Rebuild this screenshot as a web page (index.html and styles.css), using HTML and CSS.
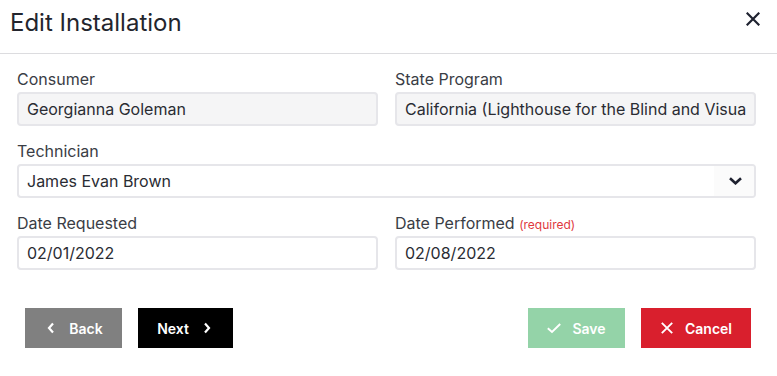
FILE: index.html
```html
<!DOCTYPE html>
<html lang="en">
<head>
<meta charset="utf-8">
<title>Edit Installation</title>
<link rel="stylesheet" href="styles.css">
</head>
<body>
<div class="modal">
  <header class="modal-header">
    <h1 class="modal-title">Edit Installation</h1>
    <button class="close" aria-label="Close">
      <svg width="14" height="14" viewBox="0 0 14 14"><path d="M1.5 1.5 L12.5 12.5 M12.5 1.5 L1.5 12.5" stroke="#1f2230" stroke-width="2.2" stroke-linecap="square" fill="none"/></svg>
    </button>
  </header>
  <form class="modal-body">
    <div class="row two">
      <div class="field">
        <label class="label">Consumer</label>
        <input class="control disabled" type="text" value="Georgianna Goleman" readonly>
      </div>
      <div class="field">
        <label class="label">State Program</label>
        <input class="control disabled" type="text" value="California (Lighthouse for the Blind and Visually Impaired)" readonly>
      </div>
    </div>
    <div class="row">
      <div class="field">
        <label class="label">Technician</label>
        <div class="control select">
          <span>James Evan Brown</span>
          <span class="caret">
            <svg width="13" height="8" viewBox="0 0 13 8"><path d="M1 1.3 L6.5 6.3 L12 1.3" stroke="#1f2230" stroke-width="2.6" fill="none"/></svg>
          </span>
        </div>
      </div>
    </div>
    <div class="row two">
      <div class="field">
        <label class="label">Date Requested</label>
        <input class="control" type="text" value="02/01/2022" readonly>
      </div>
      <div class="field">
        <label class="label">Date Performed <span class="req">(required)</span></label>
        <input class="control" type="text" value="02/08/2022" readonly>
      </div>
    </div>
  </form>
  <footer class="modal-footer">
    <div class="group">
      <button class="btn btn-back">
        <svg class="ico" width="14" height="14" viewBox="0 0 14 14"><path d="M9 2.5 L5 7 L9 11.5" stroke="#fff" stroke-width="2.2" fill="none"/></svg>
        <span>Back</span>
      </button>
      <button class="btn btn-next">
        <span>Next</span>
        <svg class="ico" width="14" height="14" viewBox="0 0 14 14"><path d="M5 2.5 L9 7 L5 11.5" stroke="#fff" stroke-width="2.2" fill="none"/></svg>
      </button>
    </div>
    <div class="group">
      <button class="btn btn-save">
        <svg class="ico" width="14" height="14" viewBox="0 0 14 14"><path d="M0.8 7.2 L5 11 L13.2 3" stroke="#fff" stroke-width="1.9" fill="none"/></svg>
        <span>Save</span>
      </button>
      <button class="btn btn-cancel">
        <svg class="ico" width="14" height="14" viewBox="0 0 14 14"><path d="M1.8 1.8 L12.2 12.2 M12.2 1.8 L1.8 12.2" stroke="#fff" stroke-width="1.9" fill="none"/></svg>
        <span>Cancel</span>
      </button>
    </div>
  </footer>
</div>
</body>
</html>
```
FILE: styles.css
```css
* { box-sizing: border-box; }
html, body {
  margin: 0;
  padding: 0;
  background: #ffffff;
}
body {
  font-family: Inter, "Noto Sans", "Liberation Sans", sans-serif;
  color: #212529;
  width: 777px;
  height: 376px;
  overflow: hidden;
}
.modal-header {
  height: 54px;
  border-bottom: 1px solid #dcdcdf;
  display: flex;
  justify-content: space-between;
  align-items: flex-start;
  padding: 8px 17px 0 10px;
}
.modal-title {
  margin: 0;
  font-size: 24px;
  font-weight: 400;
  line-height: 29px;
  color: #23252d;
  letter-spacing: 0;
}
.close {
  border: 0;
  background: none;
  padding: 0;
  margin-top: 4px;
  width: 14px;
  height: 14px;
  display: block;
}
.close svg { display: block; }
.modal-body {
  padding: 13px 21px 0 17px;
  margin: 0;
  display: flex;
  flex-direction: column;
  gap: 13px;
}
.row { display: grid; grid-template-columns: 1fr; }
.row.two { grid-template-columns: 1fr 1fr; column-gap: 17px; }
.field { display: flex; flex-direction: column; min-width: 0; }
.label {
  font-size: 16px;
  line-height: 24px;
  height: 24px;
  color: #3a3d45;
  margin-bottom: 1px;
}
.req {
  font-size: 12px;
  line-height: 1;
  color: #e0383e;
}
.control {
  height: 34px;
  width: 100%;
  border: 2px solid #e6e6ea;
  border-radius: 4px;
  background: #fff;
  font-family: Inter, "Noto Sans", "Liberation Sans", sans-serif;
  font-size: 16px;
  color: #2a2c33;
  padding: 0 8px;
  outline: none;
  margin: 0;
}
.control.disabled { background: #f5f5f6; }
.select {
  display: flex;
  align-items: center;
  justify-content: space-between;
  padding: 0 0 0 8px;
  overflow: hidden;
}
.caret {
  width: 40px;
  height: 100%;
  display: flex;
  align-items: center;
  justify-content: flex-start;
  padding-left: 15px;
  background: #fbfbfb;
}
.caret svg { display: block; }
.modal-footer {
  display: flex;
  justify-content: space-between;
  padding: 38px 26px 0 25px;
}
.group { display: flex; gap: 16px; }
.btn {
  height: 40px;
  border: 0;
  border-radius: 0;
  display: flex;
  align-items: center;
  justify-content: center;
  gap: 11px;
  color: #fff;
  font-family: Inter, "Noto Sans", "Liberation Sans", sans-serif;
  font-size: 14px;
  font-weight: 600;
  padding: 0;
}
.ico { display: block; flex: none; }
.btn-back { width: 97px; background: #808080; }
.btn-next { width: 95px; background: #000; }
.btn-save { width: 97px; background: #94d3a8; }
.btn-cancel { width: 110px; background: #d91f2d; }
```
